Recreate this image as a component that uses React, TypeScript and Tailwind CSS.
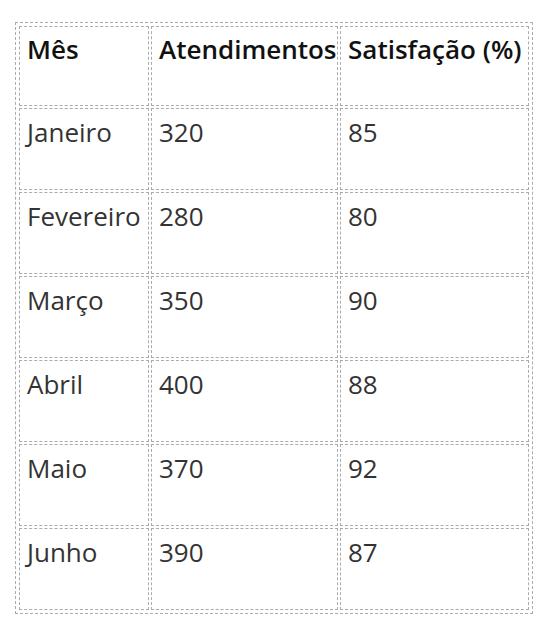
import React from "react";

const rows = [
  ["Janeiro", "320", "85"],
  ["Fevereiro", "280", "80"],
  ["Março", "350", "90"],
  ["Abril", "400", "88"],
  ["Maio", "370", "92"],
  ["Junho", "390", "87"],
];

const cell =
  "border border-dashed border-[#ababab] align-top pl-[7px] pt-[4px] pr-0 leading-[36px] text-left";

export default function App() {
  return (
    <div className="bg-white w-[538px] h-[617px] pl-[15px] pt-[22px]" style={{ fontFamily: '"Open Sans", "Noto Sans", sans-serif' }}>
      <table className="border border-dashed border-[#ababab] border-separate border-spacing-[2px] p-[1px] text-[26px] text-[#333]">
        <thead>
          <tr>
            <th className={`${cell} w-[130px] h-[80px] font-semibold text-[#111]`}>Mês</th>
            <th className={`${cell} w-[187px] h-[80px] font-semibold text-[#111]`}>Atendimentos</th>
            <th className={`${cell} w-[189px] h-[80px] font-semibold text-[#111]`}>Satisfação (%)</th>
          </tr>
        </thead>
        <tbody>
          {rows.map((r) => (
            <tr key={r[0]}>
              <td className={`${cell} h-[82px] pt-[5px]`}>{r[0]}</td>
              <td className={`${cell} h-[82px] pt-[5px]`}>{r[1]}</td>
              <td className={`${cell} h-[82px] pt-[5px]`}>{r[2]}</td>
            </tr>
          ))}
        </tbody>
      </table>
    </div>
  );
}
